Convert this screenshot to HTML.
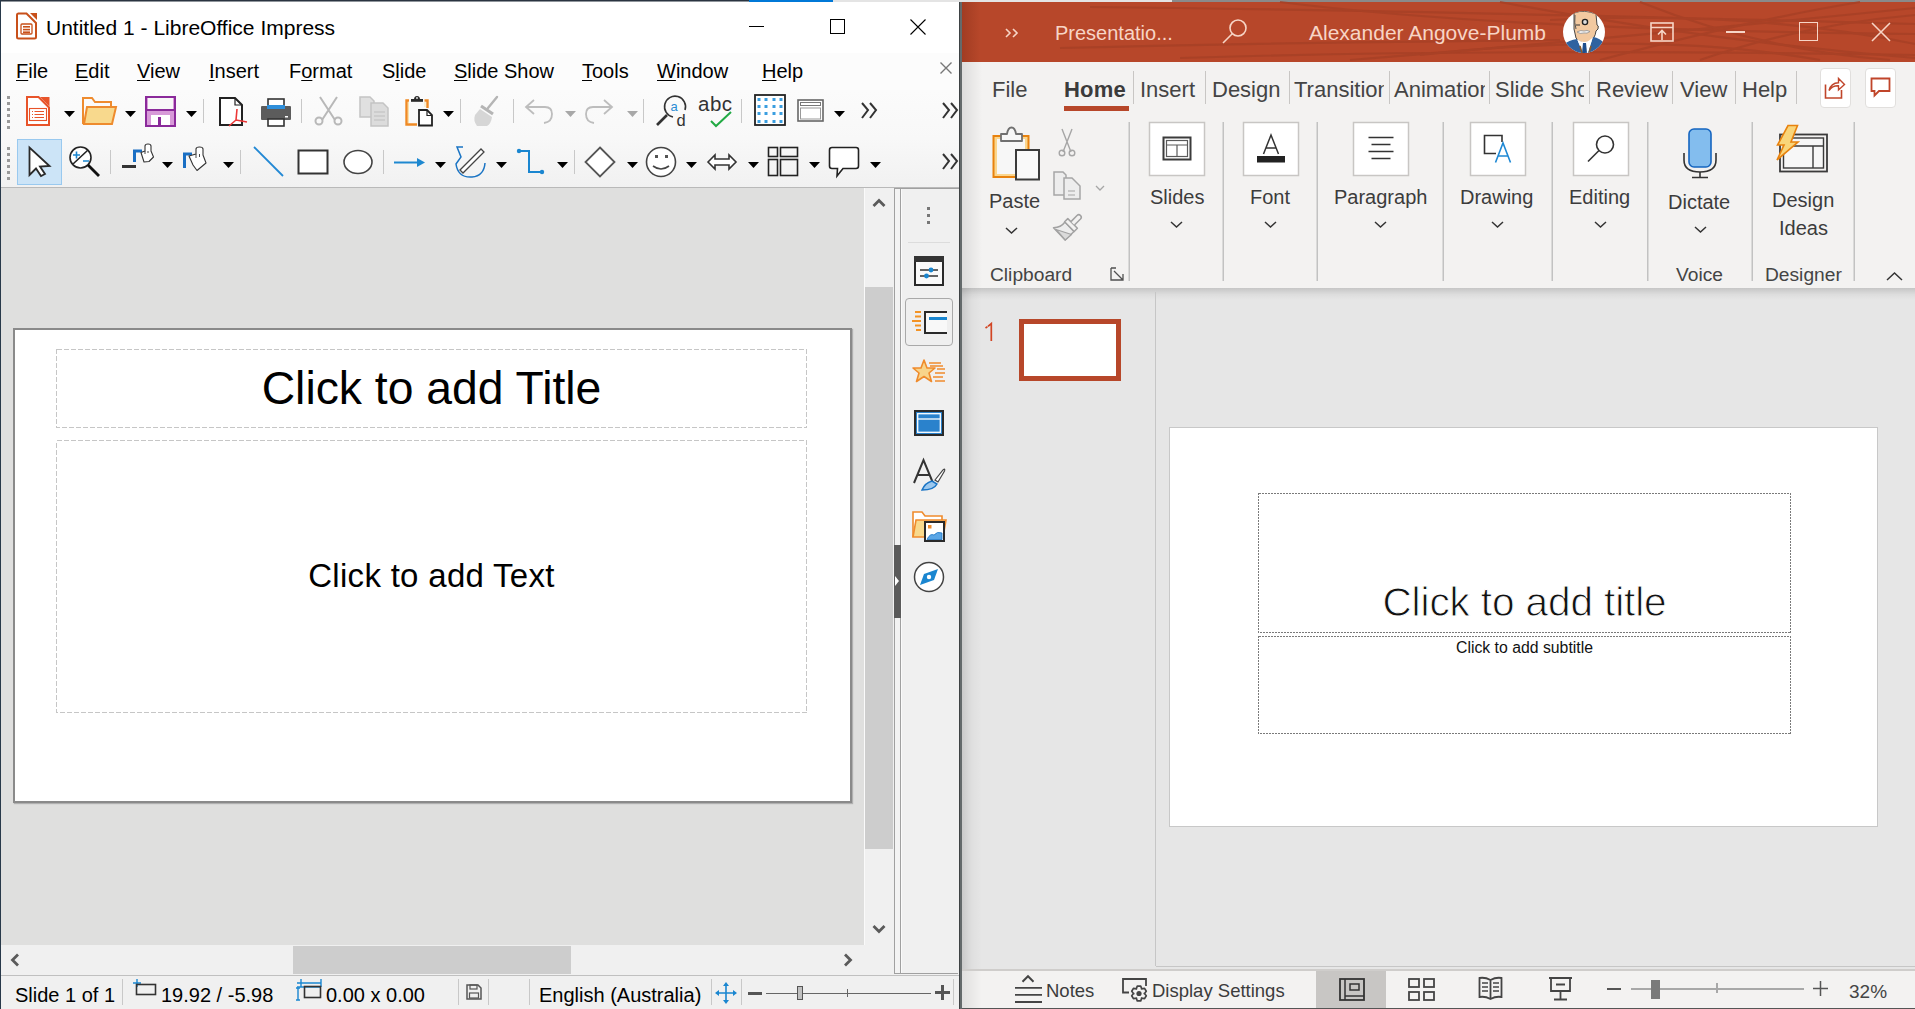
<!DOCTYPE html>
<html><head><meta charset="utf-8">
<style>
*{box-sizing:border-box}
html,body{margin:0;padding:0}
body{width:1915px;height:1009px;position:relative;overflow:hidden;background:#fff;font-family:"Liberation Sans",sans-serif;color:#000}
.a{position:absolute}
.t{position:absolute;white-space:pre;line-height:1}
u{text-decoration-thickness:1px;text-underline-offset:1.6px}
svg{position:absolute;overflow:visible}
</style></head><body>

<!-- ================= LEFT: LIBREOFFICE ================= -->
<div class="a" id="lo" style="left:0;top:0;width:960px;height:1009px;background:#fff">
  <!-- top border -->
  <div class="a" style="left:0;top:0;width:749px;height:1px;background:#2a3440"></div>
  <div class="a" style="left:0;top:1px;width:749px;height:1px;background:#8f959b"></div>
  <div class="a" style="left:749px;top:0;width:84px;height:2px;background:#0078d7"></div>
  <div class="a" style="left:833px;top:0;width:127px;height:2px;background:#e4e4e4"></div>
  <div class="a" style="left:0;top:0;width:1px;height:1009px;background:#28394a"></div>

  <!-- title bar -->
  <svg style="left:16px;top:12px" width="22" height="28" viewBox="0 0 22 28">
    <path d="M2,1.5 H10.5 L20,11 V25 Q20,26.5 18.5,26.5 H2.5 Q1,26.5 1,25 V3 Q1,1.5 2.5,1.5Z" fill="#fff" stroke="#c8501a" stroke-width="2"/>
    <path d="M14,1 H21 V8Z" fill="#c8501a"/>
    <rect x="5" y="12" width="11" height="10" rx="1" fill="none" stroke="#c8501a" stroke-width="1.3"/>
    <rect x="7" y="14" width="7" height="1.6" fill="#c8501a"/><rect x="7" y="16.8" width="7" height="1.6" fill="#c8501a"/><rect x="7" y="19.4" width="7" height="1.6" fill="#c8501a"/>
  </svg>
  <div class="t" style="left:46px;top:17px;font-size:21px">Untitled 1 - LibreOffice Impress</div>
  <!-- window controls -->
  <div class="a" style="left:749px;top:26px;width:15px;height:1px;background:#000"></div>
  <div class="a" style="left:830px;top:19px;width:15px;height:15px;border:1px solid #000"></div>
  <svg style="left:910px;top:19px" width="16" height="16"><path d="M0.5,0.5 L15.5,15.5 M15.5,0.5 L0.5,15.5" stroke="#000" stroke-width="1.1"/></svg>

  <!-- menu bar -->
  <div class="a" style="left:1px;top:53px;width:958px;height:37px;background:#fcfcfc"></div>
  <div class="t" style="left:16px;top:61px;font-size:20px"><u>F</u>ile</div>
  <div class="t" style="left:75px;top:61px;font-size:20px"><u>E</u>dit</div>
  <div class="t" style="left:137px;top:61px;font-size:20px"><u>V</u>iew</div>
  <div class="t" style="left:209px;top:61px;font-size:20px"><u>I</u>nsert</div>
  <div class="t" style="left:289px;top:61px;font-size:20px">F<u>o</u>rmat</div>
  <div class="t" style="left:382px;top:61px;font-size:20px">S<u>l</u>ide</div>
  <div class="t" style="left:454px;top:61px;font-size:20px"><u>S</u>lide Show</div>
  <div class="t" style="left:582px;top:61px;font-size:20px"><u>T</u>ools</div>
  <div class="t" style="left:657px;top:61px;font-size:20px"><u>W</u>indow</div>
  <div class="t" style="left:762px;top:61px;font-size:20px"><u>H</u>elp</div>
  <svg style="left:940px;top:62px" width="12" height="12"><path d="M0.5,0.5 L11.5,11.5 M11.5,0.5 L0.5,11.5" stroke="#777" stroke-width="1.4"/></svg>

  <!-- toolbars bg -->
  <div class="a" style="left:1px;top:90px;width:958px;height:97px;background:linear-gradient(#fbfbfb 0%,#f8f8f8 50%,#f1f1f1 100%)"></div>
  <div class="a" style="left:1px;top:187px;width:958px;height:1px;background:#b9b9b9"></div>

  <!-- toolbar 1 -->
  <svg style="left:0;top:88px" width="960" height="100" viewBox="0 88 960 100">
    <defs>
      <path id="tri" d="M0,0 H11 L5.5,6Z" fill="#000"/>
      <path id="trig" d="M0,0 H11 L5.5,6Z" fill="#a8a8a8"/>
    </defs>
    <!-- grip -->
    <g fill="#999"><rect x="7" y="96" width="3" height="3"/><rect x="7" y="102" width="3" height="3"/><rect x="7" y="108" width="3" height="3"/><rect x="7" y="114" width="3" height="3"/><rect x="7" y="120" width="3" height="3"/><rect x="7" y="126" width="3" height="3"/></g>
    <!-- new -->
    <path d="M27,97 H38.5 L49,107.5 V125 H27Z" fill="#fff" stroke="#e8542a" stroke-width="2"/>
    <path d="M40,97 H49.5 V106.5Z" fill="#e8542a"/>
    <rect x="29.5" y="108.5" width="17" height="12" fill="none" stroke="#e8542a" stroke-width="1.1"/>
    <path d="M34.5,111.5 H44 M34.5,114.5 H44 M34.5,117.5 H44" stroke="#e8542a" stroke-width="1"/>
    <path d="M32,111.5 H33 M32,114.5 H33 M32,117.5 H33" stroke="#e8542a" stroke-width="1"/>
    <use href="#tri" x="64" y="111"/>
    <!-- open -->
    <path d="M83,124 V98 H92 L95,102 H111 V106" fill="none" stroke="#ee8b2e" stroke-width="2"/>
    <path d="M84,124 L87,107 H116 L112,124Z" fill="#f8d98d" stroke="#ee8b2e" stroke-width="2"/>
    <use href="#tri" x="125" y="111"/>
    <!-- save -->
    <rect x="146" y="97" width="29" height="29" fill="#d79ad8" stroke="#8a2a9a" stroke-width="2"/>
    <rect x="148" y="98" width="25" height="11" fill="#f7f7f7"/>
    <rect x="146" y="109" width="29" height="2" fill="#8a2a9a"/>
    <rect x="151" y="115" width="19" height="10" fill="#fff"/>
    <rect x="158" y="117" width="3" height="8" fill="#8a2a9a"/>
    <use href="#tri" x="186" y="111"/>
    <rect x="203" y="99" width="1" height="24" fill="#c8c8c8"/>
    <!-- pdf -->
    <path d="M220,98 H235 L242,105 V125 H220Z" fill="#fff" stroke="#222" stroke-width="2"/>
    <path d="M235,98 V105 H242" fill="none" stroke="#222" stroke-width="1.2"/>
    <path d="M237,109 L236,120 M236,120 L229,126 M236,120 L247,122" stroke="#ec3838" stroke-width="1.6" fill="none"/>
    <!-- print -->
    <rect x="268" y="99" width="16" height="8" fill="#fff" stroke="#333" stroke-width="1.6"/>
    <rect x="261" y="106" width="30" height="14" rx="1" fill="#5c5c5c"/>
    <rect x="267" y="105" width="18" height="4" fill="#2f8fdb"/>
    <rect x="268" y="119" width="16" height="7" fill="#fff" stroke="#333" stroke-width="1.6"/>
    <rect x="285" y="116" width="3" height="1.5" fill="#fff"/>
    <rect x="301" y="99" width="1" height="24" fill="#c8c8c8"/>
    <!-- cut (gray) -->
    <g stroke="#b8b8b8" stroke-width="2" fill="none"><path d="M320,97 L335,120 M337,97 L322,120"/><circle cx="319" cy="121" r="3.5"/><circle cx="338" cy="121" r="3.5"/></g>
    <!-- copy (gray) -->
    <path d="M360,97 H370 L374,101 V117 H360Z" fill="#e0e0e0" stroke="#c4c4c4" stroke-width="1.5"/>
    <path d="M371,103 H383 L388,108 V126 H371Z" fill="#dcdcdc" stroke="#c4c4c4" stroke-width="1.5"/>
    <path d="M374,112 H385 M374,116 H385 M374,120 H385" stroke="#bdbdbd" stroke-width="1.2"/>
    <!-- paste -->
    <path d="M409,100.5 H406.5 V124.5 H417 M424.5,100.5 H427.5 V108" fill="none" stroke="#f08a24" stroke-width="2.4"/>
    <path d="M408.5,102 V123 M425,102 V107" stroke="#fbe3a8" stroke-width="1"/>
    <rect x="411" y="99" width="12" height="2.8" fill="#2a2a2a"/>
    <path d="M414,99.5 Q414,96 417,96 Q420,96 420,99.5Z" fill="#2a2a2a"/>
    <rect x="416" y="97.2" width="2" height="1.6" fill="#ccc"/>
    <path d="M419,110 H427 L432,115 V125.5 H419Z" fill="#fff" stroke="#222" stroke-width="1.8"/>
    <path d="M427,110 V115.5 H432" fill="none" stroke="#222" stroke-width="1.2"/>
    <use href="#tri" x="443" y="111"/>
    <rect x="460" y="99" width="1" height="24" fill="#c8c8c8"/>
    <!-- clone (gray) -->
    <path d="M488,108 L497,97" stroke="#b5b5b5" stroke-width="2.4" stroke-linecap="round"/>
    <path d="M481,106 L493,114" stroke="#b5b5b5" stroke-width="3.2"/>
    <path d="M480,109 L492,117 Q491,124 487,126 H477 Q473,121 475,115Z" fill="#d6d6d6"/>
    <rect x="513" y="99" width="1" height="24" fill="#c8c8c8"/>
    <!-- undo -->
    <path d="M527,107 H545 Q552,107 552,114 Q552,122 544,123" fill="none" stroke="#bdbdbd" stroke-width="1.8"/>
    <path d="M534,100 L526,107 L534,114" fill="none" stroke="#bdbdbd" stroke-width="1.8"/>
    <use href="#trig" x="565" y="111"/>
    <!-- redo -->
    <path d="M611,107 H593 Q586,107 586,114 Q586,122 594,123" fill="none" stroke="#bdbdbd" stroke-width="1.8"/>
    <path d="M604,100 L612,107 L604,114" fill="none" stroke="#bdbdbd" stroke-width="1.8"/>
    <use href="#trig" x="627" y="111"/>
    <rect x="643" y="99" width="1" height="24" fill="#c8c8c8"/>
    <!-- find replace -->
    <path d="M685,110 A10.5,10.5 0 1 0 673,117" fill="none" stroke="#333" stroke-width="1.6"/>
    <path d="M667,115 L657,125" stroke="#333" stroke-width="2.6"/>
    <text x="670.5" y="111" font-family="Liberation Sans" font-size="13" fill="#2a8dd4">a</text>
    <text x="676.5" y="126" font-family="Liberation Sans" font-size="16.5" fill="#333">d</text>
    <!-- spelling -->
    <text x="698" y="111" font-family="Liberation Sans" font-size="20.5" fill="#333" textLength="34">abc</text>
    <path d="M711,121 L716,126 L731,112" fill="none" stroke="#22aa44" stroke-width="2"/>
    <rect x="741" y="99" width="1" height="24" fill="#c8c8c8"/>
    <!-- grid -->
    <rect x="755" y="95" width="30" height="30" fill="#fff" stroke="#222" stroke-width="1.8"/>
    <g fill="#3a9ee0">
      <rect x="757.5" y="98" width="3" height="3"/><rect x="764.5" y="98" width="3" height="3"/><rect x="772.5" y="98" width="3" height="3"/><rect x="779.5" y="98" width="3" height="3"/>
      <rect x="757.5" y="105" width="3" height="3"/><rect x="764.5" y="105" width="3" height="3"/><rect x="772.5" y="105" width="3" height="3"/><rect x="779.5" y="105" width="3" height="3"/>
      <rect x="757.5" y="112" width="3" height="3"/><rect x="764.5" y="112" width="3" height="3"/><rect x="772.5" y="112" width="3" height="3"/><rect x="779.5" y="112" width="3" height="3"/>
      <rect x="757.5" y="120" width="3" height="3"/><rect x="764.5" y="120" width="3" height="3"/><rect x="772.5" y="120" width="3" height="3"/><rect x="779.5" y="120" width="3" height="3"/>
    </g>
    <!-- display views -->
    <rect x="798" y="100" width="25" height="21" fill="#fff" stroke="#666" stroke-width="1.6"/>
    <rect x="800.5" y="102.5" width="20" height="3" fill="none" stroke="#777" stroke-width="1"/>
    <rect x="800.5" y="108" width="20" height="11" fill="none" stroke="#999" stroke-width="1"/>
    <use href="#tri" x="834" y="111"/>
    <!-- >> -->
    <path d="M862,103 L868,110 L862,118 M870,103 L876,110 L870,118" fill="none" stroke="#333" stroke-width="2"/>
    <path d="M943,103 L949,110 L943,118 M951,103 L957,110 L951,118" fill="none" stroke="#333" stroke-width="2"/>

    <!-- ===== toolbar 2 ===== -->
    <g fill="#999"><rect x="7" y="147" width="3" height="3"/><rect x="7" y="153" width="3" height="3"/><rect x="7" y="159" width="3" height="3"/><rect x="7" y="165" width="3" height="3"/><rect x="7" y="171" width="3" height="3"/><rect x="7" y="177" width="3" height="3"/></g>
    <rect x="17.5" y="139.5" width="44" height="45" fill="#cce4f7" stroke="#99c9ef" stroke-width="1"/>
    <path d="M29.5,147.5 V175 L36,168.5 L41,176 L45,174 L40,166.5 L49.5,166Z" fill="#fff" stroke="#2a2a2a" stroke-width="1.8" stroke-linejoin="miter"/>
    <!-- zoom pan -->
    <circle cx="80.5" cy="157.5" r="10.5" fill="#fff" stroke="#222" stroke-width="1.6"/>
    <path d="M73,164 L88,150" stroke="#222" stroke-width="1.6"/>
    <path d="M73,155 H80 M76.5,151.5 V158.5 M83,161 H89" stroke="#1a86d0" stroke-width="1.6"/>
    <path d="M88,165 L99,176" stroke="#111" stroke-width="2.8"/>
    <rect x="110" y="150" width="1" height="24" fill="#c8c8c8"/>
    <!-- points -->
    <rect x="122" y="165" width="14" height="3" fill="#333"/>
    <path d="M134.5,162 V151 H142" fill="none" stroke="#1a6fc4" stroke-width="3"/>
    <path d="M141,152.5 L145,151 V146 Q145,144 148,144 Q151,144 151,146 V151 L153.5,157 L149,161.5 L144,162Z" fill="#fff" stroke="#333" stroke-width="1.1" stroke-linejoin="round"/>
    <path d="M145,151 V154 M148,151 V153" stroke="#333" stroke-width="0.9"/>
    <use href="#tri" x="162" y="162"/>
    <path d="M184.5,168 V154 H192" fill="none" stroke="#1a6fc4" stroke-width="3"/>
    <path d="M189,156 L196,154 V149 Q196,147 199.5,147 Q203,147 203,149 V155 L206,163 L197,170.5 L193,165Z" fill="#fff" stroke="#333" stroke-width="1.1" stroke-linejoin="round"/>
    <path d="M196,154 V158 M199.5,154 V157" stroke="#333" stroke-width="0.9"/>
    <use href="#tri" x="223" y="162"/>
    <rect x="240" y="150" width="1" height="24" fill="#c8c8c8"/>
    <!-- line -->
    <path d="M254,147 L283,176" stroke="#2288d4" stroke-width="1.8"/>
    <!-- rect -->
    <rect x="298.5" y="150.5" width="29" height="23" fill="#fff" stroke="#333" stroke-width="2"/>
    <!-- ellipse -->
    <ellipse cx="358" cy="162" rx="14" ry="11.5" fill="#fff" stroke="#444" stroke-width="1.6"/>
    <rect x="383" y="150" width="1" height="24" fill="#c8c8c8"/>
    <!-- arrow -->
    <path d="M394,162.5 H419" stroke="#1e88d0" stroke-width="2"/>
    <path d="M417,158 L425,162.5 L417,167Z" fill="#1e88d0"/>
    <use href="#tri" x="435" y="162"/>
    <!-- curve -->
    <path d="M463,147 H457 L461,157 L456,164 Q458,178 472,177 Q484,176 485,163" fill="none" stroke="#1a74c4" stroke-width="1.5"/>
    <path d="M460,170 L481,149 L484,152 L463,173Z" fill="#fff" stroke="#444" stroke-width="1.3"/>
    <use href="#tri" x="496" y="162"/>
    <!-- connector -->
    <path d="M519,151 H529 V172 H542" fill="none" stroke="#1a86d0" stroke-width="2"/>
    <circle cx="519" cy="151" r="2.2" fill="#1a86d0"/><circle cx="542" cy="172" r="2.2" fill="#1a86d0"/>
    <use href="#tri" x="557" y="162"/>
    <rect x="574" y="150" width="1" height="24" fill="#c8c8c8"/>
    <!-- diamond -->
    <path d="M600,147.5 L614.5,162 L600,176.5 L585.5,162Z" fill="#fff" stroke="#555" stroke-width="1.8"/>
    <use href="#tri" x="627" y="162"/>
    <!-- smiley -->
    <circle cx="661" cy="162" r="14.5" fill="#fff" stroke="#444" stroke-width="1.6"/>
    <rect x="655" y="155" width="3" height="3" fill="#555"/><rect x="665" y="155" width="3" height="3" fill="#555"/>
    <path d="M653,166 Q661,172 669,166" fill="none" stroke="#444" stroke-width="1.6"/>
    <use href="#tri" x="686" y="162"/>
    <!-- double arrow -->
    <path d="M708,162 L715,155 V159 H729 V155 L736,162 L729,169 V165 H715 V169Z" fill="#fff" stroke="#333" stroke-width="1.6"/>
    <use href="#tri" x="748" y="162"/>
    <!-- flowchart -->
    <g fill="none" stroke="#222" stroke-width="1.6"><rect x="768.5" y="147.5" width="9" height="9"/><rect x="780.5" y="147.5" width="17" height="9"/><rect x="768.5" y="159.5" width="9" height="16"/><rect x="780.5" y="159.5" width="17" height="16"/></g>
    <use href="#tri" x="809" y="162"/>
    <!-- callout -->
    <path d="M832,147.5 H856 Q858.5,147.5 858.5,150 V166 Q858.5,168.5 856,168.5 H843 L837,176 L837.5,168.5 H832 Q829.5,168.5 829.5,166 V150 Q829.5,147.5 832,147.5Z" fill="#fff" stroke="#222" stroke-width="1.6"/>
    <use href="#tri" x="870" y="162"/>
    <path d="M943,154 L949,161 L943,169 M951,154 L957,161 L951,169" fill="none" stroke="#333" stroke-width="2"/>
  </svg>

  <!-- main area -->
  <div class="a" style="left:1px;top:188px;width:864px;height:757px;background:#dfdfde"></div>
  <!-- slide -->
  <div class="a" style="left:13px;top:328px;width:839px;height:475px;background:#fff;border:2px solid #8a8a8a;box-shadow:1px 1px 1px #b0b0b0"></div>
  <svg style="left:0;top:0" width="960" height="1009" shape-rendering="crispEdges">
    <rect x="56.5" y="349.5" width="750" height="78" fill="none" stroke="#c6c6c6" stroke-width="1" stroke-dasharray="5 2"/>
    <rect x="56.5" y="440.5" width="750" height="272" fill="none" stroke="#c6c6c6" stroke-width="1" stroke-dasharray="5 2"/>
  </svg>
  <div class="t" style="left:56px;top:365px;width:751px;text-align:center;font-size:46.3px">Click to add Title</div>
  <div class="t" style="left:56px;top:559px;width:751px;text-align:center;font-size:33px;letter-spacing:0.3px">Click to add Text</div>

  <!-- vscroll -->
  <div class="a" style="left:865px;top:188px;width:30px;height:757px;background:#f0f0f0"></div>
  <div class="a" style="left:864px;top:188px;width:1px;height:757px;background:#fafafa"></div>
  <div class="a" style="left:865px;top:287px;width:28px;height:562px;background:#cdcdcd"></div>
  <svg style="left:872px;top:198px" width="14" height="10"><path d="M1.5,8 L7,2.5 L12.5,8" fill="none" stroke="#5a5a5a" stroke-width="2.8"/></svg>
  <svg style="left:872px;top:924px" width="14" height="10"><path d="M1.5,2 L7,7.5 L12.5,2" fill="none" stroke="#5a5a5a" stroke-width="2.8"/></svg>

  <!-- sidebar -->
  <div class="a" style="left:894px;top:188px;width:65px;height:787px;background:#f0f0f0"></div>
  <div class="a" style="left:894px;top:188px;width:1px;height:786px;background:#a0a0a0"></div>
  <div class="a" style="left:895px;top:189px;width:5px;height:784px;background:#f3f3f3"></div>
  <div class="a" style="left:900px;top:188px;width:1px;height:786px;background:#a0a0a0"></div>
  <div class="a" style="left:901px;top:189px;width:1px;height:784px;background:#fafafa"></div>
  <div class="a" style="left:894px;top:188px;width:65px;height:1px;background:#a0a0a0"></div>
  <div class="a" style="left:894px;top:973px;width:64px;height:1px;background:#a0a0a0"></div>
  <div class="a" style="left:894px;top:545px;width:7px;height:73px;background:#5a5a5a"></div>
  <svg style="left:894px;top:575px" width="7" height="12"><path d="M1,1 L5,6 L1,11Z" fill="#fff"/></svg>
  <div class="a" style="left:927px;top:207px;width:3px;height:3px;background:#777"></div>
  <div class="a" style="left:927px;top:214px;width:3px;height:3px;background:#777"></div>
  <div class="a" style="left:927px;top:221px;width:3px;height:3px;background:#777"></div>
  <div class="a" style="left:908px;top:242px;width:42px;height:1px;background:#dcdcdc"></div>
  <svg style="left:0;top:0" width="960" height="1009">
    <!-- properties -->
    <rect x="915" y="257" width="28" height="28" fill="#fafafa" stroke="#2a2a2a" stroke-width="2"/>
    <rect x="914" y="256" width="30" height="6" fill="#333"/>
    <path d="M920,270 H938 M920,276 H938" stroke="#333" stroke-width="1.5"/>
    <circle cx="931" cy="270" r="2.4" fill="#1a86d0"/><circle cx="926.5" cy="276" r="2.4" fill="#1a86d0"/>
    <!-- transition selected -->
    <rect x="905.5" y="298.5" width="47" height="47" rx="3.5" fill="#efefef" stroke="#a9a9a9" stroke-width="1"/>
    <path d="M947,312 H925 V333 H947" fill="#f8f8f8" stroke="#2a2a2a" stroke-width="2"/>
    <path d="M929,318.5 H947" stroke="#1a86d0" stroke-width="3"/>
    <path d="M915,312 H921 M915,316.5 H921 M912,321 H921 M915,325.5 H921 M916,330 H921" stroke="#f39325" stroke-width="1.8"/>
    <!-- animation -->
    <path d="M924,360 L927,368 L935,368 L929,373 L931.5,381.5 L924,376.5 L916.5,381.5 L919,373 L913,368 L921,368Z" fill="#f8d48a" stroke="#ef8b2c" stroke-width="1.6" stroke-linejoin="round"/>
    <path d="M929,363 H941 M930,366 H943 M937,369 H945 M935,373 H945 M933,377 H943 M935,381 H945" stroke="#ef8b2c" stroke-width="1.5"/>
    <!-- master slides -->
    <rect x="915" y="411" width="28" height="24" fill="#2a82cc" stroke="#2a2a2a" stroke-width="2"/>
    <rect x="917.7" y="413.7" width="22.6" height="18.6" fill="none" stroke="#fff" stroke-width="1.3"/>
    <path d="M917.7,419 H940.3" stroke="#fff" stroke-width="1.3"/>
    <!-- styles -->
    <path d="M914,483 L923.5,460 L933,483 M918,475 H929" fill="none" stroke="#333" stroke-width="2"/>
    <path d="M935,480 L943,470 Q945.5,468 944.5,471 L938,482Z" fill="#fff" stroke="#444" stroke-width="1.2"/>
    <path d="M922,490 Q925,483 932,481 L937,484 Q934,490 922,490Z" fill="#9cc8ee" stroke="#1a74c4" stroke-width="1.5"/>
    <!-- gallery -->
    <path d="M913,537 V512 H922 L925,516 H942 V520" fill="#fff" stroke="#ef8b2c" stroke-width="1.6"/>
    <path d="M913,537 L916,520 H946 L943,537Z" fill="#f8d98d" stroke="#ef8b2c" stroke-width="1.6"/>
    <rect x="925" y="522" width="19" height="19" fill="#fff" stroke="#2a2a2a" stroke-width="2"/>
    <path d="M927,539.5 Q930,533 934,535 Q937,531 942,533 V539.5Z" fill="#5aa6e6" stroke="#1a74c4" stroke-width="0.8"/>
    <rect x="928" y="525" width="3.5" height="3.5" fill="#ef8b2c"/>
    <!-- navigator -->
    <circle cx="929" cy="577" r="14.5" fill="#fff" stroke="#444" stroke-width="1.5"/>
    <path d="M938,569 L934,580 L920,585 L924,574Z" fill="#1a86d0"/>
    <circle cx="929" cy="577" r="2.2" fill="#fff"/>
  </svg>

  <!-- hscroll -->
  <div class="a" style="left:1px;top:945px;width:893px;height:30px;background:#f0f0f0"></div>
  <div class="a" style="left:293px;top:946px;width:278px;height:28px;background:#cdcdcd"></div>
  <svg style="left:10px;top:953px" width="10" height="14"><path d="M8,1.5 L2.5,7 L8,12.5" fill="none" stroke="#5a5a5a" stroke-width="2.8"/></svg>
  <svg style="left:843px;top:953px" width="10" height="14"><path d="M2,1.5 L7.5,7 L2,12.5" fill="none" stroke="#5a5a5a" stroke-width="2.8"/></svg>

  <!-- status bar -->
  <div class="a" style="left:1px;top:975px;width:958px;height:34px;background:#f0f0f0"></div>
  <div class="a" style="left:1px;top:975px;width:958px;height:1px;background:#c0c0c0"></div>
  <div class="t" style="left:15px;top:985px;font-size:20px">Slide 1 of 1</div>
  <div class="a" style="left:122px;top:979px;width:1px;height:26px;background:#c8c8c8"></div>
  <svg style="left:133px;top:979px" width="30" height="24">
    <path d="M4,0 V8 M0,4 H8" stroke="#1a86d0" stroke-width="1.4"/>
    <rect x="3.5" y="5.5" width="19" height="10" fill="none" stroke="#333" stroke-width="1.6"/>
  </svg>
  <div class="t" style="left:161px;top:985px;font-size:20px">19.92 / -5.98</div>
  <svg style="left:296px;top:978px" width="30" height="26">
    <path d="M5,1 V9 M1,9 H25 M1,5 H25 M25,1 V9" stroke="#1a86d0" stroke-width="1.4" fill="none"/>
    <rect x="8.5" y="8.5" width="16" height="11" fill="none" stroke="#333" stroke-width="1.6"/>
    <path d="M2,10 V22 M0,10 H4 M0,22 H4" stroke="#1a86d0" stroke-width="1.4"/>
  </svg>
  <div class="t" style="left:326px;top:985px;font-size:20px">0.00 x 0.00</div>
  <div class="a" style="left:458px;top:979px;width:1px;height:26px;background:#c8c8c8"></div>
  <svg style="left:466px;top:984px" width="16" height="16">
    <path d="M1,1 H12 L15,4 V15 H1Z" fill="none" stroke="#555" stroke-width="1.5"/>
    <rect x="4" y="1" width="7" height="4" fill="none" stroke="#555" stroke-width="1.2"/>
    <rect x="3.5" y="9" width="9" height="5" fill="none" stroke="#555" stroke-width="1.2"/>
  </svg>
  <div class="a" style="left:488px;top:979px;width:1px;height:26px;background:#c8c8c8"></div>
  <div class="a" style="left:529px;top:979px;width:1px;height:26px;background:#c8c8c8"></div>
  <div class="t" style="left:539px;top:985px;font-size:20px">English (Australia)</div>
  <div class="a" style="left:711px;top:979px;width:1px;height:26px;background:#c8c8c8"></div>
  <svg style="left:715px;top:982px" width="22" height="22">
    <path d="M11,2 V20 M2,11 H20" stroke="#1a86d0" stroke-width="1.6"/>
    <path d="M11,0 L8,4 H14Z M11,22 L8,18 H14Z M0,11 L4,8 V14Z M22,11 L18,8 V14Z" fill="#1a86d0"/>
  </svg>
  <div class="a" style="left:741px;top:979px;width:1px;height:26px;background:#c8c8c8"></div>
  <div class="a" style="left:748px;top:992px;width:14px;height:3px;background:#555"></div>
  <div class="a" style="left:766px;top:993px;width:165px;height:1px;background:#666"></div>
  <div class="a" style="left:797px;top:986px;width:6px;height:14px;background:#c0c0c0;border:1px solid #555"></div>
  <div class="a" style="left:847px;top:989px;width:1px;height:8px;background:#666"></div>
  <svg style="left:935px;top:985px" width="15" height="15"><path d="M7.5,0 V15 M0,7.5 H15" stroke="#555" stroke-width="3"/></svg>
  <div class="a" style="left:953px;top:979px;width:1px;height:26px;background:#c8c8c8"></div>
</div>

<!-- ================= RIGHT: POWERPOINT ================= -->
<div class="a" id="pp" style="left:959px;top:0;width:956px;height:1009px;background:#e6e6e6;overflow:hidden">
  <div class="a" style="left:0;top:0;width:213px;height:2px;background:#e4e4e4"></div>
  <div class="a" style="left:213px;top:0;width:743px;height:2px;background:#8a8a8a"></div>
  <div class="a" style="left:0;top:2px;width:1px;height:1007px;background:#3e4244"></div>
  <div class="a" style="left:1px;top:2px;width:2px;height:1007px;background:#646a6b"></div>
  <!-- title bar -->
  <div class="a" style="left:3px;top:2px;width:953px;height:60px;background:#b7472a"></div>
  <div class="a" style="left:3px;top:2px;width:18px;height:60px;background:linear-gradient(90deg,rgba(120,40,20,0.35),rgba(120,40,20,0))"></div>
  <svg style="left:3px;top:2px" width="953" height="60" viewBox="962 2 953 60">
    <g stroke="#a53f25" stroke-width="2.2" fill="none" opacity="0.75">
      <path d="M1090,7 Q1400,10 1915,24"/>
      <path d="M1280,2 Q1500,30 1915,34"/>
      <path d="M1060,48 Q1300,42 1560,40"/>
      <path d="M1180,58 Q1500,48 1915,55"/>
      <path d="M1350,60 Q1600,40 1915,8"/>
      <path d="M1500,2 Q1700,40 1915,58"/>
      <path d="M1600,60 Q1750,20 1860,2"/>
      <path d="M1640,2 Q1760,50 1890,60"/>
      <path d="M1700,60 Q1800,25 1915,15"/>
      <path d="M1550,20 Q1750,10 1915,44"/>
      <path d="M1420,55 Q1650,30 1820,60"/>
    </g>
  </svg>
  <svg style="left:45px;top:27px" width="16" height="12"><path d="M2,2 L6,6 L2,10 M9,2 L13,6 L9,10" fill="none" stroke="#f7d5c6" stroke-width="1.6"/></svg>
  <div class="t" style="left:96px;top:23px;font-size:20px;color:#f7d5c6">Presentatio...</div>
  <svg style="left:263px;top:18px" width="28" height="28">
    <circle cx="16" cy="10" r="8" fill="none" stroke="#f7d5c6" stroke-width="1.6"/>
    <path d="M10.5,15.5 L1,25" stroke="#f7d5c6" stroke-width="1.6"/>
  </svg>
  <div class="t" style="left:350px;top:22px;font-size:21px;color:#f7d5c6">Alexander Angove-Plumb</div>
  <!-- avatar -->
  <svg style="left:604px;top:11px" width="42" height="42" viewBox="0 0 42 42">
    <defs><clipPath id="avc"><circle cx="21" cy="21" r="21"/></clipPath></defs>
    <g clip-path="url(#avc)">
      <rect width="42" height="42" fill="#fff"/>
      <path d="M11,2 Q21,-2 33,3 L34,14 Q36,14 35,18 L33,20 Q32,28 26,31 L21,32 Q15,31 13,27 L11,18Z" fill="#f2c9a0" stroke="#333" stroke-width="0.9"/>
      <path d="M12,4 Q11,12 13,18" fill="none" stroke="#555" stroke-width="1"/>
      <circle cx="22" cy="11" r="2.6" fill="#ddd" stroke="#222" stroke-width="1.4"/>
      <path d="M13,14 H17" stroke="#333" stroke-width="1.2"/>
      <path d="M14,21 Q18,18.5 21,20 Q24,18.5 27,20.5 Q24,23 21,22 Q17,23.5 14,21Z" fill="#eee" stroke="#888" stroke-width="0.7"/>
      <path d="M0,42 V34 Q6,29 14,28 L20,42Z M42,42 V33 Q37,27 30,26 L24,42Z" fill="#2f62a0"/>
      <path d="M14,28 L20,42 H25 L30,26 Q26,31 21,31 Q17,31 14,28Z" fill="#fff"/>
      <path d="M20,32 L23,32 L24,42 H19Z" fill="#1f4f8e"/>
      <path d="M17,35 L19,42 M28,35 L26,42" stroke="#8a5a2a" stroke-width="1.5"/>
    </g>
  </svg>
  <svg style="left:691px;top:22px" width="24" height="20">
    <rect x="1" y="1" width="22" height="18" fill="none" stroke="#f7d5c6" stroke-width="1.6"/>
    <path d="M1,5.5 H23 M12,18 V9 M8,12.5 L12,8.5 L16,12.5" fill="none" stroke="#f7d5c6" stroke-width="1.6"/>
  </svg>
  <div class="a" style="left:767px;top:31px;width:19px;height:2px;background:#f7d5c6"></div>
  <div class="a" style="left:840px;top:22px;width:19px;height:19px;border:1.6px solid #f7d5c6"></div>
  <svg style="left:912px;top:22px" width="20" height="20"><path d="M1,1 L19,19 M19,1 L1,19" stroke="#f7d5c6" stroke-width="1.6"/></svg>

  <!-- ribbon tabs -->
  <div class="a" style="left:3px;top:62px;width:953px;height:226px;background:#f3f2f1"></div>
  <div class="a" style="left:3px;top:62px;width:20px;height:226px;background:linear-gradient(90deg,rgba(0,0,0,0.09),rgba(0,0,0,0))"></div>
  <div class="t" style="left:33px;top:79px;font-size:22px;color:#444">File</div>
  <div class="t" style="left:105px;top:79px;font-size:22px;color:#3b3b3b;font-weight:bold;letter-spacing:0.2px">Home</div>
  <div class="a" style="left:105px;top:106px;width:65px;height:5px;background:#b7472a"></div>
  <div class="a" style="left:174px;top:71px;width:1px;height:33px;background:#c8c6c4"></div>
  <div class="a" style="left:176px;top:62px;width:70px;height:50px;overflow:hidden"><div class="t" style="left:5px;top:17px;font-size:22px;color:#444">Insert</div></div>
  <div class="a" style="left:246px;top:71px;width:1px;height:33px;background:#c8c6c4"></div>
  <div class="a" style="left:247px;top:62px;width:83px;height:50px;overflow:hidden"><div class="t" style="left:6px;top:17px;font-size:22px;color:#444">Design</div></div>
  <div class="a" style="left:330px;top:71px;width:1px;height:33px;background:#c8c6c4"></div>
  <div class="a" style="left:331px;top:62px;width:94px;height:50px;overflow:hidden"><div class="t" style="left:4px;top:17px;font-size:22px;color:#444">Transitions</div></div>
  <div class="a" style="left:430px;top:71px;width:1px;height:33px;background:#c8c6c4"></div>
  <div class="a" style="left:431px;top:62px;width:95px;height:50px;overflow:hidden"><div class="t" style="left:4px;top:17px;font-size:22px;color:#444">Animations</div></div>
  <div class="a" style="left:530px;top:71px;width:1px;height:33px;background:#c8c6c4"></div>
  <div class="a" style="left:531px;top:62px;width:94px;height:50px;overflow:hidden"><div class="t" style="left:5px;top:17px;font-size:22px;color:#444">Slide Show</div></div>
  <div class="a" style="left:630px;top:71px;width:1px;height:33px;background:#c8c6c4"></div>
  <div class="t" style="left:637px;top:79px;font-size:22px;color:#444">Review</div>
  <div class="a" style="left:713px;top:71px;width:1px;height:33px;background:#c8c6c4"></div>
  <div class="t" style="left:721px;top:79px;font-size:22px;color:#444">View</div>
  <div class="a" style="left:776px;top:71px;width:1px;height:33px;background:#c8c6c4"></div>
  <div class="t" style="left:783px;top:79px;font-size:22px;color:#444">Help</div>
  <div class="a" style="left:837px;top:71px;width:1px;height:33px;background:#c8c6c4"></div>
  <div class="a" style="left:861px;top:68px;width:31px;height:40px;background:#fff;border:1px solid #e1dfdd;border-radius:4px"></div>
  <svg style="left:865px;top:74px" width="24" height="26">
    <path d="M1.5,10.5 V24 H17.5 V16" fill="none" stroke="#c0452a" stroke-width="1.6"/>
    <path d="M5,16.5 Q7,9 14.5,8.8 V4.5 L20.5,10.5 L14.5,16 V11.8 Q8.5,11.5 5,16.5Z" fill="none" stroke="#c0452a" stroke-width="1.4" stroke-linejoin="miter"/>
  </svg>
  <div class="a" style="left:906px;top:68px;width:31px;height:40px;background:#fff;border:1px solid #e1dfdd;border-radius:4px"></div>
  <svg style="left:910px;top:76px" width="24" height="24">
    <path d="M2.5,2.5 H20.5 V15 H10 L5.5,19.5 V15 H2.5Z" fill="none" stroke="#c0452a" stroke-width="1.8" stroke-linejoin="miter"/>
  </svg>

  <!-- ribbon body -->
  <svg style="left:0;top:0" width="956" height="300" viewBox="959 0 956 300">
    <!-- clipboard -->
    <rect x="993.5" y="136" width="35" height="41" fill="#fbd68d" stroke="#e8820e" stroke-width="2"/>
    <rect x="997" y="139" width="28" height="35" fill="#f7f7f7"/>
    <path d="M1001,141 V134 H1007 Q1008,127.5 1011.5,127.5 Q1015,127.5 1016,134 H1022 V141Z" fill="#f7f7f7" stroke="#707070" stroke-width="1.8" stroke-linejoin="round"/>
    <rect x="1016" y="150" width="23" height="29.5" fill="#f9f9f9" stroke="#3b3b3b" stroke-width="2"/>
    <!-- cut -->
    <g stroke="#a6a6a6" stroke-width="1.4" fill="none">
      <path d="M1062,129 L1071,152 M1072,129 L1063,152"/>
      <circle cx="1062" cy="153" r="2.8"/><circle cx="1072" cy="153" r="2.8"/>
    </g>
    <!-- copy -->
    <path d="M1054,172 H1063 L1066,175 V195 H1054Z" fill="#ededed" stroke="#a6a6a6" stroke-width="1.5"/>
    <path d="M1064,178 H1072 L1080,186 V199 H1064Z" fill="#ededed" stroke="#a6a6a6" stroke-width="1.5"/>
    <path d="M1068,191 H1075 M1068,195 H1075" stroke="#a6a6a6" stroke-width="1.2"/>
    <path d="M1096,186 L1100,190 L1104,186" fill="none" stroke="#a6a6a6" stroke-width="1.3"/>
    <!-- painter -->
    <path d="M1065,222 Q1061,227.5 1053.5,227.8 L1065.2,240 L1074,231.5Z" fill="#ededed" stroke="#a2a2a2" stroke-width="1.5" stroke-linejoin="round"/>
    <path d="M1056,229.5 L1071.5,234.5 L1065.2,240Z" fill="#dadada" stroke="#a2a2a2" stroke-width="1.3" stroke-linejoin="round"/>
    <path d="M1064.6,221.8 L1067.8,218.6 L1077.4,228.3 L1074.2,231.5Z" fill="#f3f2f1" stroke="#a2a2a2" stroke-width="1.5" stroke-linejoin="round"/>
    <path d="M1071,221.6 L1077,215.5 Q1078.8,213.8 1080.5,215.5 Q1082.2,217.2 1080.5,219 L1074.5,225" fill="#f3f2f1" stroke="#a2a2a2" stroke-width="1.5" stroke-linejoin="round"/>
    <!-- clipboard label -->
    <path d="M1111,268 V280 H1123 M1111,268 H1116 M1114,271 L1123,280 M1123,274 V280 H1117" fill="none" stroke="#505050" stroke-width="1.3"/>
    <path d="M1006,228 L1011.5,233 L1017,228" fill="none" stroke="#333" stroke-width="1.5"/>
    <rect x="1128.5" y="122" width="1.5" height="159" fill="#c2c2c2"/>
    <!-- slides -->
    <rect x="1149.5" y="122.5" width="55" height="53" fill="#fff" stroke="#c8c6c4" stroke-width="1.5"/>
    <rect x="1163.5" y="137.5" width="27" height="22" fill="none" stroke="#3b3b3b" stroke-width="2"/>
    <rect x="1166.5" y="140.5" width="21" height="16" fill="none" stroke="#5a5a5a" stroke-width="1.2"/>
    <path d="M1167,145 H1187 M1177,145 V156" stroke="#5a5a5a" stroke-width="1.2"/>
    <path d="M1171,222 L1176.5,227 L1182,222" fill="none" stroke="#333" stroke-width="1.5"/>
    <rect x="1222.5" y="122" width="1.5" height="159" fill="#c2c2c2"/>
    <!-- font -->
    <rect x="1243.5" y="122.5" width="55" height="53" fill="#fff" stroke="#c8c6c4" stroke-width="1.5"/>
    <path d="M1263.5,154 L1271,135 L1278.5,154 M1266,148 H1276" fill="none" stroke="#333" stroke-width="1.5"/>
    <rect x="1257" y="156" width="28" height="6.5" fill="#222"/>
    <path d="M1265,222 L1270.5,227 L1276,222" fill="none" stroke="#333" stroke-width="1.5"/>
    <rect x="1316.5" y="122" width="1.5" height="159" fill="#c2c2c2"/>
    <!-- paragraph -->
    <rect x="1353.5" y="122.5" width="55" height="53" fill="#fff" stroke="#c8c6c4" stroke-width="1.5"/>
    <path d="M1368.5,137.5 H1393.5 M1371.5,144.5 H1390.5 M1368.5,151.5 H1393.5 M1371.5,158.5 H1390.5" stroke="#333" stroke-width="1.6"/>
    <path d="M1375,222 L1380.5,227 L1386,222" fill="none" stroke="#333" stroke-width="1.5"/>
    <rect x="1442.5" y="122" width="1.5" height="159" fill="#c2c2c2"/>
    <!-- drawing -->
    <rect x="1470.5" y="122.5" width="55" height="53" fill="#fff" stroke="#c8c6c4" stroke-width="1.5"/>
    <path d="M1502,142 V135.5 H1484.5 V153.5 H1496" fill="none" stroke="#333" stroke-width="1.6"/>
    <path d="M1495.5,162.5 L1503,143 L1510.5,162.5 M1498,156 H1508" fill="none" stroke="#1e88d4" stroke-width="1.6"/>
    <path d="M1492,222 L1497.5,227 L1503,222" fill="none" stroke="#333" stroke-width="1.5"/>
    <rect x="1551.5" y="122" width="1.5" height="159" fill="#c2c2c2"/>
    <!-- editing -->
    <rect x="1573.5" y="122.5" width="55" height="53" fill="#fff" stroke="#c8c6c4" stroke-width="1.5"/>
    <circle cx="1605" cy="144.5" r="8.5" fill="none" stroke="#333" stroke-width="1.6"/>
    <path d="M1599,150.5 L1588,161.5" stroke="#333" stroke-width="1.6"/>
    <path d="M1595,222 L1600.5,227 L1606,222" fill="none" stroke="#333" stroke-width="1.5"/>
    <rect x="1647" y="122" width="1.5" height="159" fill="#c2c2c2"/>
    <!-- dictate -->
    <rect x="1689" y="129" width="22" height="38" rx="5" fill="#83bdee" stroke="#1565c0" stroke-width="1.6"/>
    <path d="M1684,153 V160 Q1684,172 1700,172 Q1716,172 1716,160 V153" fill="none" stroke="#333" stroke-width="1.6"/>
    <path d="M1700,172 V177 M1692,177.5 H1708" stroke="#333" stroke-width="1.6"/>
    <path d="M1695,227 L1700.5,232 L1706,227" fill="none" stroke="#333" stroke-width="1.5"/>
    <rect x="1751.5" y="122" width="1.5" height="159" fill="#c2c2c2"/>
    <!-- designer -->
    <rect x="1780" y="134.5" width="47" height="37" fill="none" stroke="#3b3b3b" stroke-width="1.8"/>
    <rect x="1783.5" y="138" width="40" height="30" fill="#f7f7f7" stroke="#3b3b3b" stroke-width="1.4"/>
    <path d="M1783.5,146 H1823.5 M1813,146 V168" stroke="#3b3b3b" stroke-width="1.4"/>
    <path d="M1788,125.5 H1797.5 L1791,142 H1798 L1777,160 L1784,145 H1777.5Z" fill="#f9d57a" stroke="#e8820e" stroke-width="1.6" stroke-linejoin="miter"/>
    <rect x="1853.5" y="122" width="1.5" height="159" fill="#c2c2c2"/>
    <path d="M1887,280 L1894.5,273 L1902,280" fill="none" stroke="#333" stroke-width="1.5"/>
  </svg>
  <div class="t" style="left:30px;top:191px;font-size:20px;color:#3c3c3c">Paste</div>
  <div class="t" style="left:31px;top:265px;font-size:19.2px;color:#444">Clipboard</div>
  <div class="t" style="left:191px;top:187px;font-size:20px;color:#3c3c3c">Slides</div>
  <div class="t" style="left:291px;top:187px;font-size:20px;color:#3c3c3c">Font</div>
  <div class="t" style="left:375px;top:187px;font-size:20px;color:#3c3c3c">Paragraph</div>
  <div class="t" style="left:501px;top:187px;font-size:20px;color:#3c3c3c">Drawing</div>
  <div class="t" style="left:610px;top:187px;font-size:20px;color:#3c3c3c">Editing</div>
  <div class="t" style="left:709px;top:192px;font-size:20px;color:#3c3c3c">Dictate</div>
  <div class="t" style="left:717px;top:265px;font-size:19.2px;color:#444">Voice</div>
  <div class="t" style="left:813px;top:190px;font-size:20px;color:#3c3c3c">Design</div>
  <div class="t" style="left:820px;top:218px;font-size:20px;color:#3c3c3c">Ideas</div>
  <div class="t" style="left:806px;top:265px;font-size:19.2px;color:#444">Designer</div>

  <!-- ribbon shadow -->
  <div class="a" style="left:3px;top:288px;width:953px;height:12px;background:linear-gradient(rgba(0,0,0,0.14),rgba(0,0,0,0.04) 55%,rgba(0,0,0,0))"></div>

  <!-- thumbnail pane -->
  <div class="a" style="left:3px;top:288px;width:20px;height:681px;background:linear-gradient(90deg,rgba(0,0,0,0.12),rgba(0,0,0,0.03) 50%,rgba(0,0,0,0))"></div>
  <div class="a" style="left:196px;top:292px;width:1px;height:674px;background:#c6c6c6"></div>
  <svg style="left:25px;top:321px" width="14" height="22"><path d="M1.5,7 L3.5,5.6 M4,5.4 L7.3,2.6 V20" fill="none" stroke="#d24523" stroke-width="1.7"/></svg>
  <div class="a" style="left:60px;top:319px;width:102px;height:62px;background:#fff;border:5px solid #b7472a"></div>

  <!-- slide -->
  <div class="a" style="left:210px;top:427px;width:709px;height:400px;background:#fff;border:1px solid #c8c8c8"></div>
  <svg style="left:0;top:0" width="956" height="1009" shape-rendering="crispEdges">
    <rect x="299.5" y="493.5" width="532" height="139" fill="none" stroke="#7a7a7a" stroke-width="1" stroke-dasharray="2 1"/>
    <rect x="299.5" y="636.5" width="532" height="97" fill="none" stroke="#7a7a7a" stroke-width="1" stroke-dasharray="2 1"/>
  </svg>
  <div class="t" style="left:299px;top:582px;width:533px;text-align:center;font-size:40.5px;color:#111;-webkit-text-stroke:0.9px #fff;letter-spacing:-0.1px">Click to add title</div>
  <div class="t" style="left:299px;top:640px;width:533px;text-align:center;font-size:15.8px;color:#111">Click to add subtitle</div>

  <!-- status bar -->
  <div class="a" style="left:197px;top:966px;width:759px;height:1px;background:#c6c6c6"></div>
  <div class="a" style="left:3px;top:969px;width:953px;height:2px;background:#cfcdcb"></div>
  <div class="a" style="left:3px;top:971px;width:953px;height:38px;background:#f3f2f1"></div>
  <div class="a" style="left:3px;top:971px;width:20px;height:37px;background:linear-gradient(90deg,rgba(0,0,0,0.08),rgba(0,0,0,0))"></div>
  <div class="a" style="left:3px;top:1008px;width:953px;height:1px;background:#555"></div>
  <svg style="left:55px;top:975px" width="30" height="30">
    <path d="M8.5,6.8 L14,1.2 L19.5,6.8" fill="none" stroke="#444" stroke-width="2"/>
    <path d="M1,12.8 H28 M1,19.9 H28 M1,27 H28" stroke="#444" stroke-width="1.8"/>
  </svg>
  <div class="t" style="left:87px;top:982px;font-size:18.5px;color:#3c3c3c">Notes</div>
  <svg style="left:163px;top:978px" width="28" height="26">
    <path d="M7,14.5 H1 V1 H24 V8" fill="none" stroke="#444" stroke-width="1.8"/>
    <path d="M14.19,11.01 L15.29,8.09 L18.71,8.09 L19.81,11.01 L19.49,10.82 L22.56,10.32 L24.27,13.28 L22.30,15.68 L22.30,15.32 L24.27,17.72 L22.56,20.68 L19.49,20.18 L19.81,19.99 L18.71,22.91 L15.29,22.91 L14.19,19.99 L14.51,20.18 L11.44,20.68 L9.73,17.72 L11.70,15.32 L11.70,15.68 L9.73,13.28 L11.44,10.32 L14.51,10.82Z" fill="#f3f2f1" stroke="#444" stroke-width="1.7" stroke-linejoin="round"/>
    <circle cx="17" cy="15.5" r="2.6" fill="#444"/>
  </svg>
  <div class="t" style="left:193px;top:982px;font-size:18.5px;color:#3c3c3c">Display Settings</div>
  <div class="a" style="left:357px;top:971px;width:70px;height:37px;background:#c8c6c4"></div>
  <svg style="left:380px;top:978px" width="26" height="24">
    <rect x="1" y="1" width="24" height="21" fill="none" stroke="#333" stroke-width="1.8"/>
    <path d="M6,1 V22 M6,18 H25" stroke="#333" stroke-width="1.5"/>
    <rect x="11" y="6" width="9" height="6" fill="none" stroke="#333" stroke-width="1.5"/>
  </svg>
  <svg style="left:449px;top:978px" width="28" height="24">
    <g fill="none" stroke="#444" stroke-width="1.8"><rect x="1" y="1" width="10" height="8"/><rect x="16" y="1" width="10" height="8"/><rect x="1" y="14" width="10" height="8"/><rect x="16" y="14" width="10" height="8"/></g>
  </svg>
  <svg style="left:519px;top:976px" width="25" height="26">
    <path d="M12.5,4 Q7,1 1.5,2 V21 Q7,20 12.5,23 Q18,20 23.5,21 V2 Q18,1 12.5,4Z M12.5,4 V23" fill="none" stroke="#444" stroke-width="1.8"/>
    <path d="M4,7 H10 M4,11 H10 M4,15 H10 M15,7 H21 M15,11 H21 M15,15 H21" stroke="#444" stroke-width="1.3"/>
  </svg>
  <svg style="left:589px;top:976px" width="25" height="26">
    <path d="M1,2 H24 M3,2 V15 H22 V2 M12.5,15 V23 M6,23.5 H19 M8,8.5 H17" fill="none" stroke="#444" stroke-width="1.8"/>
  </svg>
  <div class="a" style="left:648px;top:988px;width:14px;height:1.5px;background:#555"></div>
  <div class="a" style="left:672px;top:987.5px;width:173px;height:2px;background:#a8a8a8"></div>
  <div class="a" style="left:692px;top:980px;width:9px;height:19px;background:#7a7a7a"></div>
  <div class="a" style="left:757px;top:983px;width:2px;height:10px;background:#a8a8a8"></div>
  <svg style="left:854px;top:981px" width="15" height="15"><path d="M7.5,0 V15 M0,7.5 H15" stroke="#555" stroke-width="1.5"/></svg>
  <div class="t" style="left:890px;top:982px;font-size:19px;color:#444">32%</div>
</div>

</body></html>
